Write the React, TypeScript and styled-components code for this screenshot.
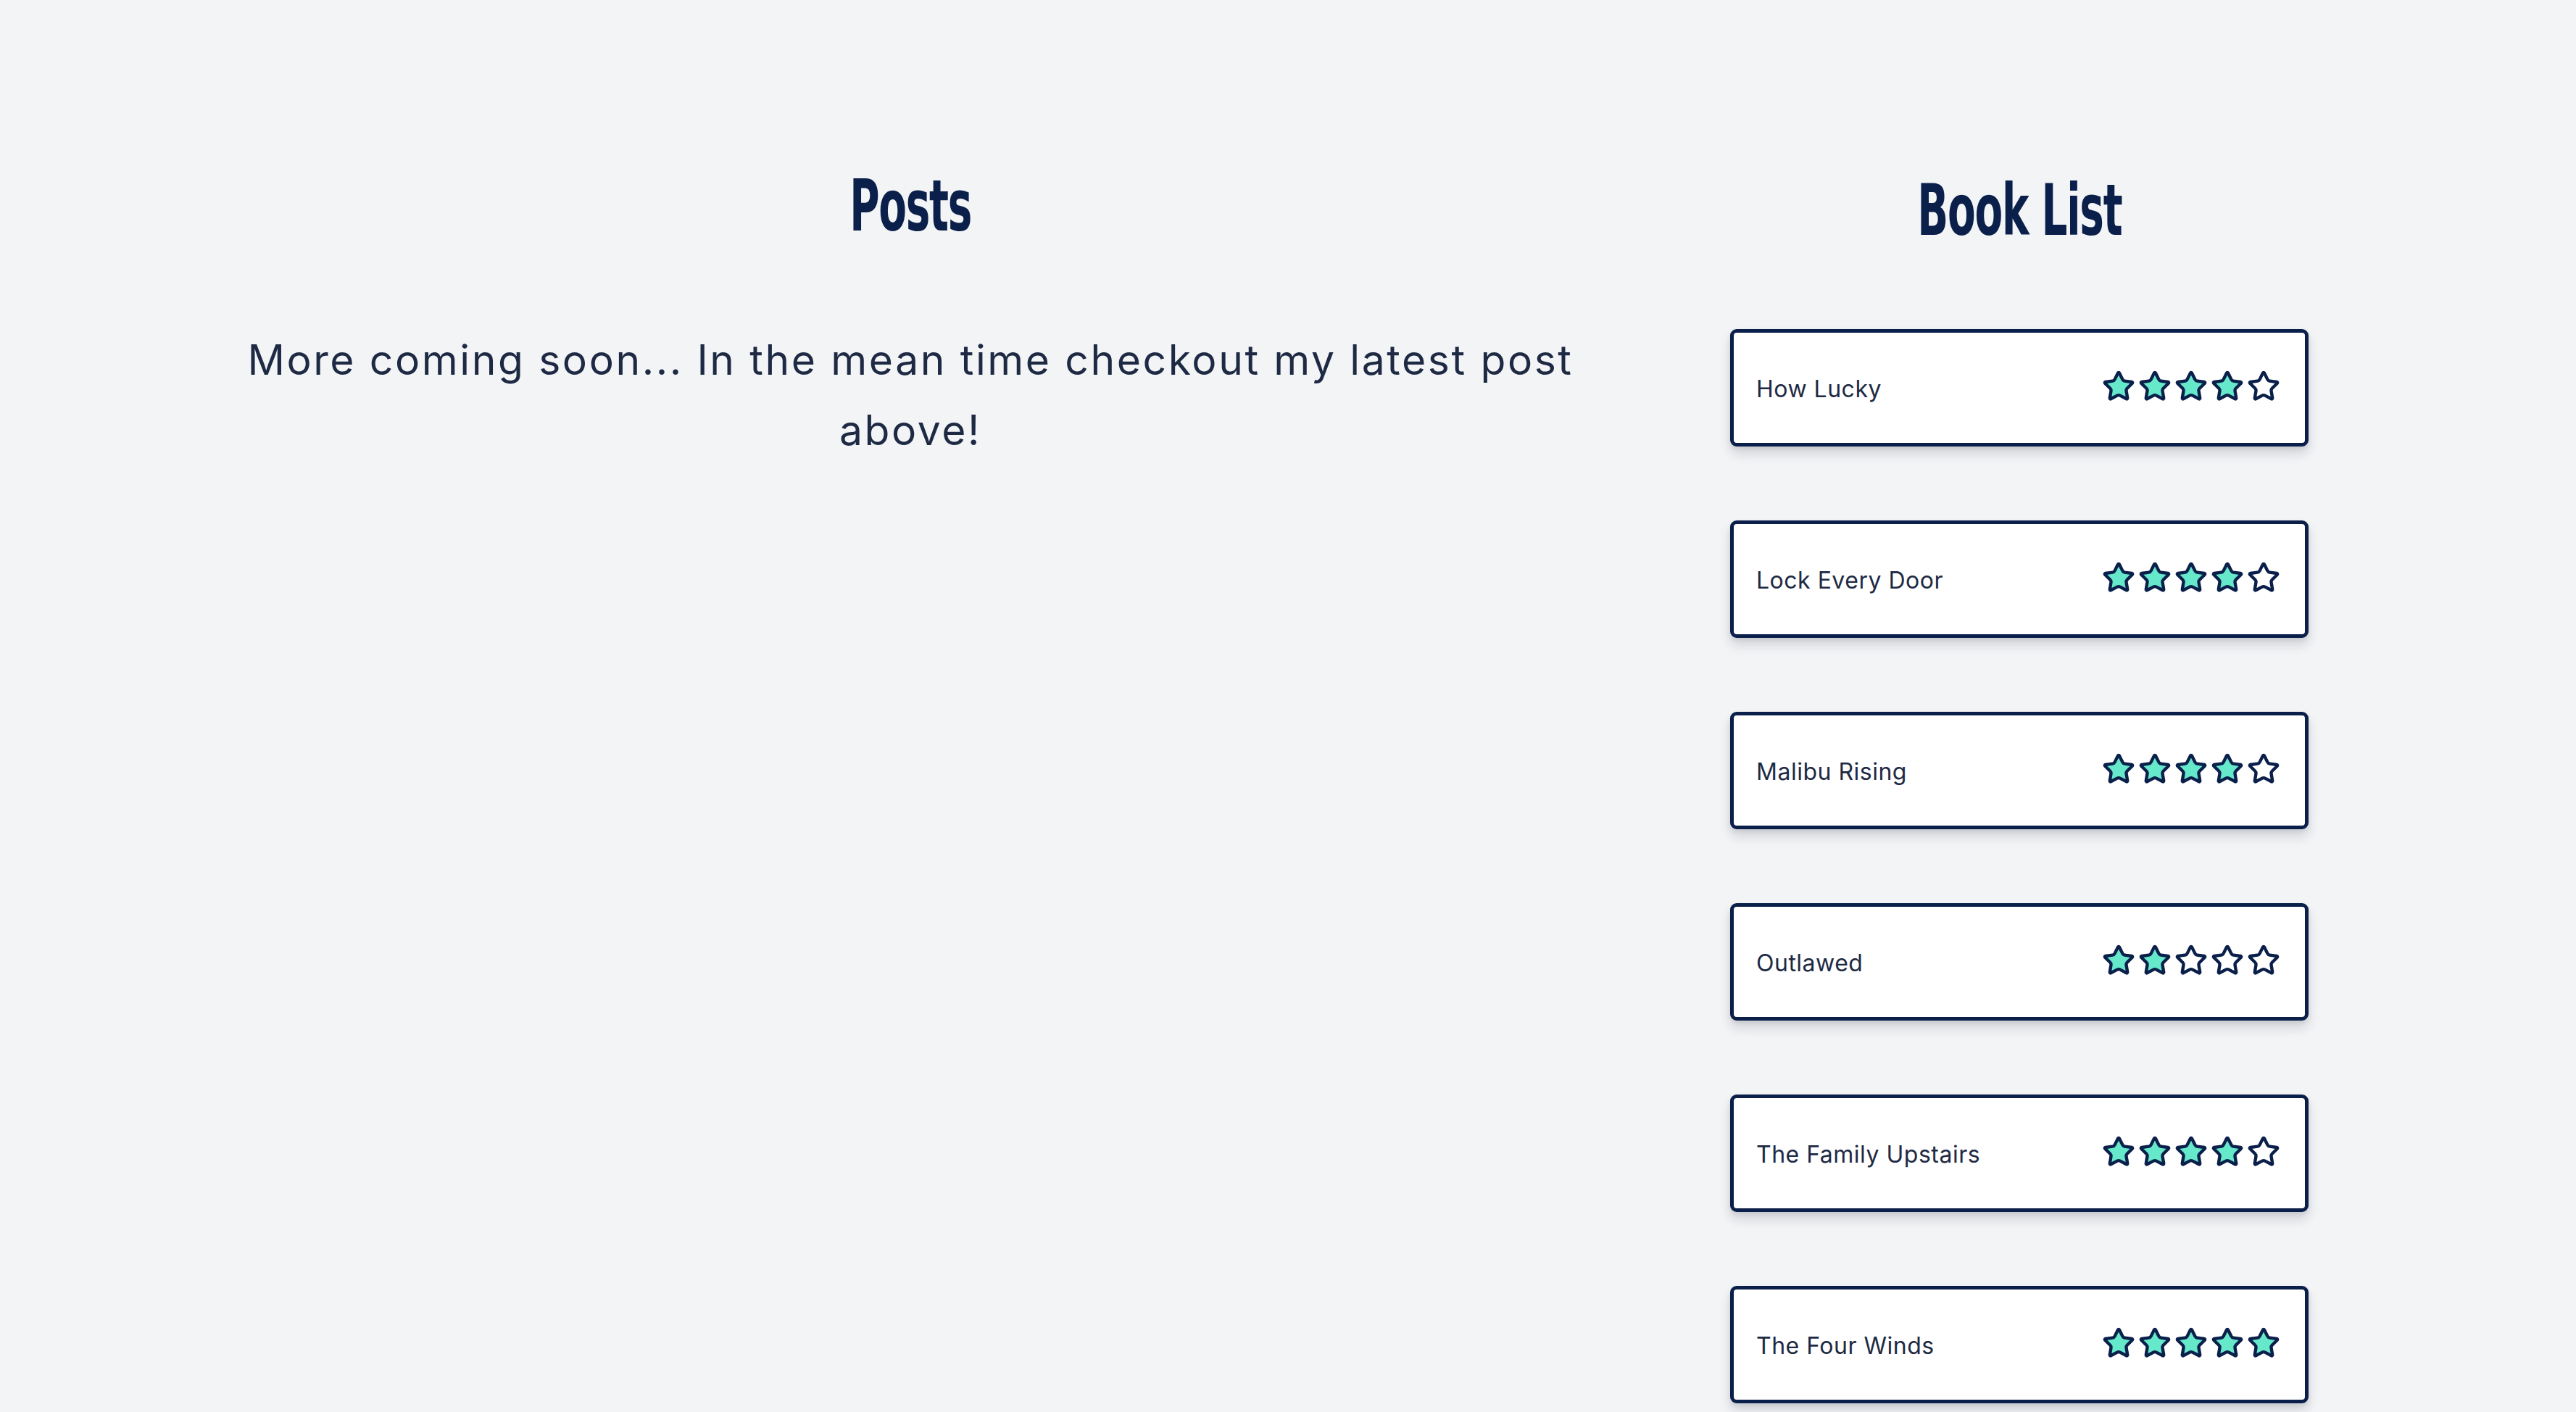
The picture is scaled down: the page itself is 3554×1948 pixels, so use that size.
import React from "react";
import styled, { createGlobalStyle } from "styled-components";
import { Star } from "lucide-react";

const GlobalStyle = createGlobalStyle`
  html, body {
    margin: 0;
    padding: 0;
    background: #f3f4f6;
  }
  body {
    font-family: Inter, "Open Sans", sans-serif;
    color: #1e293b;
  }
  * { box-sizing: border-box; }
`;

const Page = styled.main`
  display: grid;
  grid-template-columns: 1912px 1148px;
  padding-left: 300px;
  min-height: 1948px;
  background: #f3f4f6;
`;

const Column = styled.section`
  display: flex;
  flex-direction: column;
  align-items: center;
`;

const Heading = styled.h2<{ $top: number }>`
  margin: ${(p) => p.$top}px 0 0 0;
  font-family: "Liberation Sans Narrow", "DejaVu Sans Condensed", "Liberation Sans", sans-serif;
  font-weight: 700;
  font-size: 98px;
  line-height: 96px;
  height: 96px;
  color: #0a1f4a;
  letter-spacing: -2px;
  transform: scaleX(0.64);
`;

const Intro = styled.p`
  margin: 116px 0 0 0;
  width: 1912px;
  text-align: center;
  font-family: Inter, "Open Sans", sans-serif;
  font-size: 57px;
  letter-spacing: 2.6px;
  line-height: 97px;
  color: #1e2a44;
`;

const BookList = styled.ul`
  list-style: none;
  margin: 116px 0 0 0;
  padding: 0;
  display: flex;
  flex-direction: column;
  gap: 102px;
`;

const BookCard = styled.li`
  width: 798px;
  height: 162px;
  display: flex;
  align-items: center;
  justify-content: space-between;
  padding: 0 34px 4px 31px;
  background: #ffffff;
  border: 5px solid #0a1f4a;
  border-radius: 9px;
  box-shadow: 0 10px 16px rgba(15, 23, 42, 0.14), 0 3px 6px rgba(15, 23, 42, 0.08);
`;

const BookTitle = styled.span`
  font-family: Inter, "Open Sans", sans-serif;
  font-size: 32px;
  letter-spacing: 0.5px;
  color: #1e2a44;
  margin-top: 6px;
`;

const Stars = styled.div`
  display: flex;
  gap: 4px;
  align-items: center;
`;

const books = [
  { title: "How Lucky", rating: 4 },
  { title: "Lock Every Door", rating: 4 },
  { title: "Malibu Rising", rating: 4 },
  { title: "Outlawed", rating: 2 },
  { title: "The Family Upstairs", rating: 4 },
  { title: "The Four Winds", rating: 5 },
];

function Rating({ value }: { value: number }) {
  return (
    <Stars>
      {[0, 1, 2, 3, 4].map((i) => (
        <Star
          key={i}
          size={46}
          strokeWidth={2.3}
          color="#0a1f4a"
          fill={i < value ? "#66e8cb" : "#ffffff"}
        />
      ))}
    </Stars>
  );
}

export default function App() {
  return (
    <>
      <GlobalStyle />
      <Page>
        <Column>
          <Heading $top={236}>Posts</Heading>
          <Intro>
            More coming soon... In the mean time checkout my latest post above!
          </Intro>
        </Column>
        <Column>
          <Heading $top={242}>Book List</Heading>
          <BookList>
            {books.map((b) => (
              <BookCard key={b.title}>
                <BookTitle>{b.title}</BookTitle>
                <Rating value={b.rating} />
              </BookCard>
            ))}
          </BookList>
        </Column>
      </Page>
    </>
  );
}
